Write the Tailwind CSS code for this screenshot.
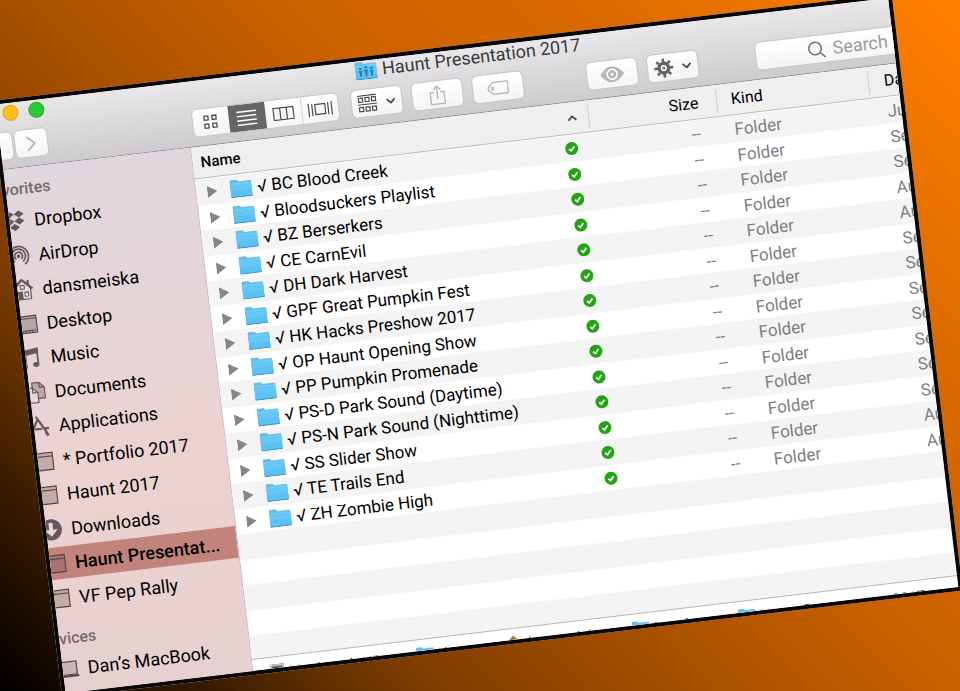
<!DOCTYPE html>
<html lang="en">

<head>
    <meta charset="UTF-8">
    <meta name="viewport" content="width=device-width, initial-scale=1.0">
    <title>Haunt Presentation 2017</title>
    <script src="https://cdn.jsdelivr.net/npm/@tailwindcss/browser@4"></script>
</head>

<body class="font-[Roboto,sans-serif] text-black">
    <!-- Shared icons -->
    <svg class="hidden">
        <symbol id="folder" viewBox="0 0 22 18">
            <path d="M.5 1.500Q.5.5 1.500.5H7L9 2.500H20.500Q21.500 2.500 21.500 3.500V17.500H.5Z" fill="#62bfec" stroke="#57b2e0" stroke-width=".6" />
            <path d="M.5 4.500H21.500V17.500H.5Z" fill="#66c6f6" />
            <path d="M.5 11H21.500V17.500H.5Z" fill="#5bc0f3" />
            <path d="M.5 4.200H21.500" stroke="#8ad6fa" stroke-width=".7" />
            <path d="M.5 17.500H21.500" stroke="#3e95c4" />
        </symbol>
        <symbol id="check" viewBox="0 0 14 14">
            <circle cx="7" cy="7" r="6.500" fill="#22a512" />
            <path d="M4.200 7.300L6.300 9.200L9.800 5.200" fill="none" stroke="#fff" stroke-width="1.800" />
        </symbol>
        <symbol id="box" viewBox="0 0 22 22">
            <path d="M1 3H21V20H1ZM1 6.500H21" fill="#6a5256" fill-opacity=".3" stroke="#574347" stroke-width="1.200" />
        </symbol>
        <symbol id="dropbox" viewBox="0 0 22 22">
            <path d="M6 1L11 4.500L6 8L1 4.500ZM16 1L21 4.500L16 8L11 4.500ZM6 8L11 11.500L6 15L1 11.500ZM16 8L21 11.500L16 15L11 11.500ZM11 14L16 17.500L11 21L6 17.500Z" fill="#66575c" />
        </symbol>
        <symbol id="airdrop" viewBox="0 0 22 22">
            <g fill="none" stroke="#66575c" stroke-width="1.700">
                <path d="M5.500 20A10 10 0 1 1 16.500 20" />
                <path d="M7 17A7 7 0 1 1 15 17" />
                <path d="M8.500 14.500A4 4 0 1 1 13.500 14.500" />
            </g>
            <circle cx="11" cy="11.500" r="1.800" fill="#66575c" />
        </symbol>
        <symbol id="home" viewBox="0 0 22 22">
            <path d="M11 2L19 10V21H3.500V10Z" fill="#e6d9dc" stroke="#66575c" stroke-width="1.200" />
            <path d="M11 1L21 11M11 1L1 11M17 2V7" stroke="#66575c" stroke-width="2" />
            <path d="M5.500 13H11V21H5.500Z" fill="#66575c" />
            <path d="M9 7H13V10.500H9ZM13 14H16.500V18H13Z" fill="#f0e4e6" stroke="#66575c" />
        </symbol>
        <symbol id="desktop" viewBox="0 0 22 22">
            <path d="M1 3H21V20H1Z" fill="#b5a6aa" stroke="#574a4e" stroke-width="1.200" />
            <path d="M1 5.500H21M4 18V20M7 18V20M10 18V20M13 18V20M16 18V20M2 17.500H20" stroke="#574a4e" />
        </symbol>
        <symbol id="music" viewBox="0 0 22 22">
            <path d="M5 3L19 1V6.500L5 8.500Z" fill="#66575c" />
            <path d="M6 4V18M18 2V17" stroke="#66575c" stroke-width="1.800" />
            <ellipse cx="4" cy="19" rx="3.200" ry="2.500" fill="#66575c" />
            <ellipse cx="15.800" cy="18" rx="3.200" ry="2.500" fill="#66575c" />
        </symbol>
        <symbol id="documents" viewBox="0 0 22 22">
            <path d="M9 1H16L21 6V17H9Z" fill="#bda7aa" stroke="#66575c" stroke-width="1.200" />
            <path d="M16 1V6H21" fill="none" stroke="#66575c" stroke-width="1.200" />
            <path d="M2 6H9L14 11V21H2Z" fill="#ead6d7" stroke="#66575c" stroke-width="1.200" />
            <path d="M9 6V11H14" fill="none" stroke="#66575c" stroke-width="1.200" />
        </symbol>
        <symbol id="apps" viewBox="0 0 22 22">
            <path d="M11 3L2 19M9 1L18 17M1 13.500H14M17 13.500H21" stroke="#66575c" stroke-width="2.200" />
            <path d="M17.500 17L19.500 21" stroke="#66575c" stroke-width="3" />
        </symbol>
        <symbol id="downloads" viewBox="0 0 22 22">
            <circle cx="11" cy="11" r="10.700" fill="#66575c" />
            <path d="M9 4H13V11H17.500L11 18L4.500 11H9Z" fill="#ecd8d8" />
        </symbol>
        <symbol id="laptop" viewBox="0 0 22 22">
            <path d="M2 4H20V17H2Z" fill="#c9b4b6" stroke="#574347" stroke-width="1.200" />
            <path d="M0 18.500H22" stroke="#574347" stroke-width="2" />
        </symbol>
        <symbol id="caret" viewBox="0 0 10 6">
            <path d="M1 1L5 5L9 1" fill="none" stroke="#4a4a4a" stroke-width="1.800" />
        </symbol>
    </svg>

    <main
        class="relative h-screen overflow-hidden bg-[linear-gradient(45deg,#000_0%,#341900_12%,#602f00_20%,#803e00_27%,#964800_36%,#a85100_43%,#cc6200_60%,#d86900_76%,#ff7f00_98%)]">
        <div
            class="absolute -left-[9px] top-[101px] flex h-[87vh] w-[calc(100vw-53px)] origin-top-left -rotate-[6.8deg] flex-col overflow-hidden border-4 border-[#0a0704] bg-white">

            <header class="shrink-0 border-b border-[#8f8c8f] bg-linear-to-b from-[#eae7eb] to-[#cdcbce]">
                <div class="flex h-5 items-center gap-[10px] pl-[6px]">
                    <button aria-label="Minimize" class="size-4 rounded-full border border-[#e5a21a] bg-[#ffbd1e]"></button>
                    <button aria-label="Zoom" class="size-4 rounded-full border border-[#25ab2d] bg-[#2bc838]"></button>
                    <h1 class="flex flex-1 items-center justify-center gap-[5px] pr-2 text-[18px] leading-5 text-[#3a3a3c]">
                        <span class="relative">
                            <svg class="h-[18px] w-[22px]"><use href="#folder" /></svg>
                            <svg class="absolute inset-0" viewBox="0 0 22 18" fill="#2580b5">
                                <path d="M4 6h3v2H4zM9.500 5h3v2h-3zM15 6h3v2h-3zM3.500 9h4v1.500h-1V15h-2v-4.500h-1zM9 8h4v2h-1v5h-2v-5H9zM14.500 9h4v1.500h-1V15h-2v-4.500h-1z" />
                            </svg>
                        </span>
                        Haunt Presentation 2017
                    </h1>
                </div>
                <div class="flex h-[45px] items-center">
                    <button aria-label="Back" class="-ml-[21px] h-[29px] w-[34px] shrink-0 rounded-md border border-[#c9c7ca] bg-linear-to-b from-white to-[#f4f4f4]"></button>
                    <button aria-label="Forward" class="ml-px flex h-[29px] w-[34px] shrink-0 items-center justify-center rounded-md border border-[#c9c7ca] bg-linear-to-b from-white to-[#f4f4f4]">
                        <svg class="h-4 w-[10px]" viewBox="0 0 10 16" fill="none" stroke="#b4b4b4" stroke-width="1.800"><path d="M1 1L8.500 8L1 15" /></svg>
                    </button>
                    <div class="ml-[145px] flex h-[29px] w-[148px] shrink-0 overflow-hidden rounded-md border border-[#c9c7ca] bg-linear-to-b from-white to-[#f4f4f4]">
                        <button aria-label="Icon view" class="flex flex-1 items-center justify-center">
                            <svg class="size-4" viewBox="0 0 16 16" fill="none" stroke="#4a4a4a" stroke-width="1.300"><path d="M1.500 1.500h4v4h-4zM9.500 1.500h4v4h-4zM1.500 9.500h4v4h-4zM9.500 9.500h4v4h-4z" /></svg>
                        </button>
                        <button aria-label="List view" class="flex flex-1 items-center justify-center bg-[#666567]">
                            <svg class="h-4 w-5" viewBox="0 0 20 16" stroke="#fff" stroke-width="1.400"><path d="M0 1.500h20M0 5.800h20M0 10.200h20M0 14.500h20" /></svg>
                        </button>
                        <button aria-label="Column view" class="flex flex-1 items-center justify-center border-r border-[#d4d4d4]">
                            <svg class="h-[14px] w-[22px]" viewBox="0 0 22 14" fill="none" stroke="#4a4a4a" stroke-width="1.200"><path d="M1 1h20v12H1zM7.700 1v12M14.300 1v12" /></svg>
                        </button>
                        <button aria-label="Cover flow" class="flex flex-1 items-center justify-center">
                            <svg class="h-[14px] w-[26px]" viewBox="0 0 26 14" fill="none" stroke="#4a4a4a" stroke-width="1.200"><path d="M8 2h10v10H8zM5 1v12M21 1v12M1.500 0v14M24.500 0v14" /></svg>
                        </button>
                    </div>
                    <button aria-label="Arrange" class="ml-3 flex h-[29px] w-[52px] shrink-0 items-center justify-center gap-2 rounded-md border border-[#c9c7ca] bg-linear-to-b from-white to-[#f4f4f4]">
                        <svg class="h-[18px] w-5" viewBox="0 0 20 18" fill="none" stroke="#4a4a4a" stroke-width="1.200"><path d="M0 .7h19M0 9.700h19M1 3h4v4H1zM7.500 3h4v4h-4zM14 3h4v4h-4zM1 12.500h4v4H1zM7.500 12.500h4v4h-4zM14 12.500h4v4h-4z" /></svg>
                        <svg class="h-[6px] w-[10px]"><use href="#caret" /></svg>
                    </button>
                    <button aria-label="Share" class="ml-[9px] flex h-[29px] w-[52px] shrink-0 items-center justify-center rounded-md border border-[#c9c7ca] bg-linear-to-b from-white to-[#f4f4f4]">
                        <svg class="h-5 w-4" viewBox="0 0 16 20" fill="none" stroke="#b4b4b4" stroke-width="1.300"><path d="M5 7H1v12h14V7h-4M8 14V1M4.500 4.500L8 1l3.500 3.500" /></svg>
                    </button>
                    <button aria-label="Tags" class="ml-[9px] flex h-[29px] w-[52px] shrink-0 items-center justify-center rounded-md border border-[#c9c7ca] bg-linear-to-b from-white to-[#f4f4f4]">
                        <svg class="h-[14px] w-[22px]" viewBox="0 0 22 14" fill="none" stroke="#b4b4b4" stroke-width="1.300"><path d="M6 1H20Q21 1 21 2V12Q21 13 20 13H6L1.500 8.500Q.5 7 1.500 5.500Z" /><circle cx="5.500" cy="7" r="1.200" /></svg>
                    </button>
                    <button aria-label="Quick Look" class="ml-[63px] flex h-[29px] w-[52px] shrink-0 items-center justify-center rounded-md border border-[#c9c7ca] bg-linear-to-b from-white to-[#f4f4f4]">
                        <svg class="h-4 w-6" viewBox="0 0 24 16"><path d="M0 8Q12-8 24 8Q12 24 0 8Z" fill="#b6b6b6" /><circle cx="12" cy="8" r="5" fill="none" stroke="#fff" stroke-width="1.600" /><circle cx="12" cy="8" r="1.600" fill="#fff" /></svg>
                    </button>
                    <button aria-label="Actions" class="ml-[9px] flex h-[29px] w-[52px] shrink-0 items-center justify-center gap-2 rounded-md border border-[#c9c7ca] bg-linear-to-b from-white to-[#f4f4f4]">
                        <svg class="size-5" viewBox="-10 -10 20 20" stroke="#626262" fill="none">
                            <circle r="4.800" stroke-width="3.400" />
                            <path d="M0-9.500V-6M0 9.500V6M-9.500 0H-6M9.500 0H6M-6.700-6.700L-4.500-4.500M6.700 6.700L4.500 4.500M-6.700 6.700L-4.500 4.500M6.700-6.700L4.500-4.500" stroke-width="2.600" />
                            <circle r="1" stroke-width="1" />
                        </svg>
                        <svg class="h-[6px] w-[10px]"><use href="#caret" /></svg>
                    </button>
                    <label class="ml-[57px] -mr-[30px] flex h-[29px] min-w-0 flex-1 items-center gap-[7px] rounded-md border border-[#c9c7ca] bg-linear-to-b from-white to-[#f4f4f4] pl-[52px]">
                        <svg class="size-[18px] shrink-0" viewBox="0 0 18 18" fill="none" stroke="#6e6e6e" stroke-width="1.500"><circle cx="7.500" cy="7.500" r="6.300" /><path d="M12 12L17 17" /></svg>
                        <input type="text" aria-label="Search" placeholder="Search" class="w-full min-w-0 bg-transparent text-[18px] leading-6 outline-none placeholder:text-[#9b9b9b]">
                    </label>
                </div>
            </header>

            <div class="flex min-h-0 flex-1">
                <nav class="w-[189px] shrink-0 overflow-hidden border-r border-[#c8b8bb] bg-linear-to-b from-[#dfd7dd] via-[#ecd2d0] via-60% to-[#e6d1d0] text-[18px]">
                    <h2 class="-ml-[21px] mt-[11px] mb-[5px] text-[16px] leading-5 font-medium text-[#746a6e]">Favorites</h2>
                    <ul id="favorites"></ul>
                    <h2 class="-ml-[19px] mt-[15px] mb-[4px] text-[16px] leading-5 font-medium text-[#746a6e]">Devices</h2>
                    <ul id="devices"></ul>
                </nav>

                <section class="flex min-w-0 flex-1 flex-col">
                    <div class="min-h-0 flex-1 overflow-hidden">
                        <table class="w-full table-fixed border-collapse text-left">
                            <colgroup>
                                <col>
                                <col class="w-[129px]">
                                <col class="w-[153px]">
                                <col class="w-[29px]">
                            </colgroup>
                            <thead class="bg-[#efefef] text-[16px] leading-6">
                                <tr class="h-[31px] border-b border-[#b9b9b9]">
                                    <th class="p-0 pt-[2px] pl-[8px] text-[15px] font-medium">
                                        <div class="flex items-center justify-between border-r border-[#cfcfcf] pr-[11px]">Name
                                            <svg class="h-[6px] w-[10px] rotate-180"><use href="#caret" /></svg>
                                        </div>
                                    </th>
                                    <th class="p-0 pt-[2px] font-normal"><div class="border-r border-[#cfcfcf] pr-[18px] text-right">Size</div></th>
                                    <th class="p-0 pt-[2px] font-normal"><div class="border-r border-[#cfcfcf] pl-[14px]">Kind</div></th>
                                    <th class="overflow-hidden p-0 pt-[2px] pl-[15px] font-normal whitespace-nowrap">Date</th>
                                </tr>
                                <tr class="h-[2px] bg-white"><td colspan="4" class="p-0"></td></tr>
                            </thead>
                            <tbody id="files" class="text-[17px] leading-6"></tbody>
                        </table>
                    </div>
                    <!-- Path bar -->
                    <footer class="flex h-3 shrink-0 items-start overflow-hidden border-t border-[#b5b5b5] bg-white pt-[7px] pl-[17px] text-[15px] leading-[18px] whitespace-nowrap">
                        <span class="flex w-[147px] shrink-0 gap-1"><i class="h-4 w-[14px] border-2 border-[#b9c4c4] bg-[#555]"></i>Macintosh HD</span>
                        <span class="flex w-[92px] shrink-0 gap-1"><svg class="h-[15px] w-[18px]"><use href="#folder" /></svg>Users</span>
                        <span class="flex w-[125px] shrink-0 gap-1"><i class="mt-[2px] size-3 rotate-45 bg-[#a9793f]"></i>dansmeiska</span>
                        <span class="flex w-[107px] shrink-0 gap-1"><svg class="h-[15px] w-[18px]"><use href="#folder" /></svg>Dropbox</span>
                        <span class="flex shrink-0 gap-1"><svg class="h-[15px] w-[18px]"><use href="#folder" /></svg>Haunt Presentation 2017</span>
                    </footer>
                </section>
            </div>
        </div>
    </main>

    <script>
        const favorites = [
            ["dropbox", "Dropbox"],
            ["airdrop", "AirDrop"],
            ["home", "dansmeiska"],
            ["desktop", "Desktop"],
            ["music", "Music"],
            ["documents", "Documents"],
            ["apps", "Applications"],
            ["box", "* Portfolio 2017"],
            ["box", "Haunt 2017"],
            ["downloads", "Downloads"],
            ["box", "Haunt Presentat..."],
            ["box", "VF Pep Rally"],
        ]
        const files = [
            ["BC Blood Creek", "Jul"],
            ["Bloodsuckers Playlist", "Sep"],
            ["BZ Berserkers", "Sep"],
            ["CE CarnEvil", "Aug"],
            ["DH Dark Harvest", "Aug"],
            ["GPF Great Pumpkin Fest", "Sep"],
            ["HK Hacks Preshow 2017", "Sep"],
            ["OP Haunt Opening Show", "Sep"],
            ["PP Pumpkin Promenade", "Sep"],
            ["PS-D Park Sound (Daytime)", "Sep"],
            ["PS-N Park Sound (Nighttime)", "Sep"],
            ["SS Slider Show", "Sep"],
            ["TE Trails End", "Aug"],
            ["ZH Zombie High", "Aug"],
        ]

        const sidebarItem = ([icon, label]) => `
            <li class="h-8 odd:mb-[3px] even:mb-[2px] ${label.startsWith("Haunt P") ? "bg-[#c3837d] font-medium" : ""}">
                <a href="#" class="flex h-8 items-center gap-[9px] whitespace-nowrap">
                    <svg class="-ml-[6px] size-[22px] shrink-0"><use href="#${icon}" /></svg>${label}
                </a>
            </li>`
        document.getElementById("favorites").innerHTML = favorites.map(sidebarItem).join("")
        document.getElementById("devices").innerHTML = sidebarItem(["laptop", "Dan’s MacBook"])

        const fileRow = ([name, date]) => `
            <tr class="odd:h-[26px] even:h-[25px] odd:bg-[#f4f4f4]">
                <td class="p-0 pl-[11px]">
                    <div class="flex items-center">
                        <svg class="h-3 w-[10px]" viewBox="0 0 10 12"><path d="M0 0L10 6L0 12Z" fill="#868686" /></svg>
                        <svg class="ml-[13px] h-[18px] w-[22px]"><use href="#folder" /></svg>
                        <span class="ml-[5px] flex-1">√ ${name}</span>
                        <svg class="mr-[14px] size-[14px]"><use href="#check" /></svg>
                    </div>
                </td>
                <td class="p-0 pr-[20px] text-right text-[#7f7f7f]">--</td>
                <td class="p-0 pl-[14px] text-[#7f7f7f]">Folder</td>
                <td class="overflow-hidden p-0 pl-[15px] whitespace-nowrap text-[#7f7f7f]">${date}</td>
            </tr>`
        // empty rows keep the stripes going to the bottom of the list
        const emptyRow = `<tr class="odd:h-[26px] even:h-[25px] odd:bg-[#f4f4f4]"><td colspan="4" class="p-0"></td></tr>`
        document.getElementById("files").innerHTML = files.map(fileRow).join("") + emptyRow.repeat(5)
    </script>
</body>

</html>
